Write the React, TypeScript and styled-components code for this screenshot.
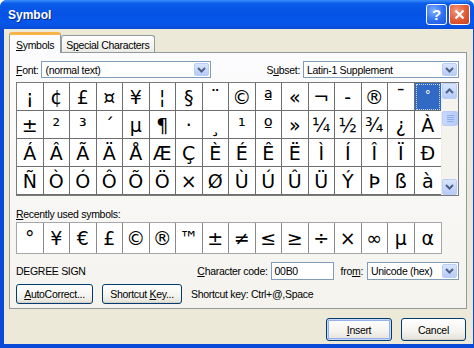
import styled, { createGlobalStyle } from "styled-components";

const GlobalStyle = createGlobalStyle`
  html, body {
    margin: 0;
    padding: 0;
    background: #ffffff;
  }
  body {
    font-family: Tahoma, "Liberation Sans", "DejaVu Sans", sans-serif;
    font-size: 10.5px;
    letter-spacing: -0.3px;
    color: #000;
  }
  * {
    box-sizing: border-box;
  }
`;

const rows: string[][] = [
  ["¡", "¢", "£", "¤", "¥", "¦", "§", "¨", "©", "ª", "«", "¬", "-", "®", "¯", "°"],
  ["±", "²", "³", "´", "µ", "¶", "·", "¸", "¹", "º", "»", "¼", "½", "¾", "¿", "À"],
  ["Á", "Â", "Ã", "Ä", "Å", "Æ", "Ç", "È", "É", "Ê", "Ë", "Ì", "Í", "Î", "Ï", "Ð"],
  ["Ñ", "Ò", "Ó", "Ô", "Õ", "Ö", "×", "Ø", "Ù", "Ú", "Û", "Ü", "Ý", "Þ", "ß", "à"],
];

const recent = ["°", "¥", "€", "£", "©", "®", "™", "±", "≠", "≤", "≥", "÷", "×", "∞", "µ", "α"];

const Window = styled.div`
  width: 474px;
  height: 348px;
  display: flex;
  flex-direction: column;
  border-radius: 7px 7px 0 0;
  overflow: hidden;
  background: #0a4ad8;
`;

const TitleBar = styled.div`
  height: 29px;
  flex: none;
  display: flex;
  align-items: center;
  padding: 0 4px 0 8px;
  background: linear-gradient(
    to bottom,
    #3c8ffc 0%,
    #0a5ce8 12%,
    #0653e6 45%,
    #0657ea 80%,
    #0a4cd6 100%
  );
`;

const Title = styled.span`
  flex: 1;
  color: #fff;
  font-family: "Liberation Sans", "DejaVu Sans", sans-serif;
  font-weight: bold;
  font-size: 12px;
  letter-spacing: 0;
  text-shadow: 1px 1px 0 #0a2a8c;
`;

const CaptionButton = styled.div<{ $close?: boolean }>`
  width: 21px;
  height: 21px;
  margin-left: 2px;
  border: 1px solid #fff;
  border-radius: 3px;
  display: flex;
  align-items: center;
  justify-content: center;
  color: #fff;
  font-family: "Liberation Sans", sans-serif;
  font-weight: bold;
  font-size: 15px;
  background: ${(p) =>
    p.$close
      ? "radial-gradient(circle at 35% 30%, #f39a7c 0%, #e05a33 55%, #c8401e 100%)"
      : "radial-gradient(circle at 35% 30%, #7fb0ff 0%, #2f6ff0 55%, #1d56dc 100%)"};
`;

const Frame = styled.div`
  flex: 1;
  padding: 0 4px 4px;
  display: flex;
`;

const Body = styled.div`
  flex: 1;
  background: #ece9d8;
  padding: 3px 6px 0 5px;
  display: flex;
  flex-direction: column;
`;

const TabRow = styled.div`
  height: 20px;
  display: flex;
  align-items: flex-end;
  position: relative;
  z-index: 1;
`;

const Tab = styled.div<{ $active?: boolean }>`
  height: ${(p) => (p.$active ? "21px" : "17px")};
  margin-bottom: ${(p) => (p.$active ? "-1px" : "0")};
  padding: 1px ${(p) => (p.$active ? "6px" : "4px")} 0;
  display: flex;
  align-items: center;
  border: 1px solid #919b9c;
  border-bottom: none;
  border-radius: 3px 3px 0 0;
  background: ${(p) =>
    p.$active ? "#fcfcfe" : "linear-gradient(#ffffff, #ecebe6)"};
  border-top: ${(p) => (p.$active ? "3px solid #f7b44a" : "1px solid #919b9c")};
`;

const Panel = styled.div`
  border: 1px solid #919b9c;
  background: linear-gradient(#fcfcfe, #f4f3ee);
  padding: 8px 7px 4px 6px;
  display: flex;
  flex-direction: column;
  height: 257px;
`;

const Row = styled.div`
  display: flex;
  align-items: center;
`;

const Label = styled.span<{ $gap?: number }>`
  margin-right: ${(p) => p.$gap ?? 3}px;
  white-space: nowrap;
`;

const SelectBox = styled.div<{ $width: number }>`
  width: ${(p) => p.$width}px;
  height: ${(p) => (p.$width > 100 ? 17 : 18)}px;
  border: 1px solid #7f9db9;
  background: #fff;
  display: flex;
  align-items: center;
  padding: 1px 1px 1px 3px;
`;

const SelectText = styled.span`
  flex: 1;
  white-space: nowrap;
`;

const ArrowButton = styled.div<{ $h?: number }>`
  width: 15px;
  height: ${(p) => p.$h ?? 15}px;
  border: 1px solid #b9cdf8;
  border-radius: 2px;
  background: linear-gradient(#d9e5fd, #b7cbf7);
  display: flex;
  align-items: center;
  justify-content: center;
`;

const Spacer = styled.div`
  flex: 1;
`;

const ListBox = styled.div`
  margin-top: 4px;
  width: 443px;
  height: 114px;
  border: 1px solid #7a7a7a;
  display: flex;
  background: #fff;
`;

const SymbolGrid = styled.div<{ $rows: number; $h: number }>`
  width: 424px;
  display: grid;
  grid-template-columns: repeat(16, 1fr);
  grid-template-rows: repeat(${(p) => p.$rows}, ${(p) => p.$h}px);
`;

const Cell = styled.div<{ $selected?: boolean; $last?: boolean; $line: string }>`
  display: flex;
  align-items: center;
  justify-content: center;
  font-family: "DejaVu Sans", "Liberation Sans", sans-serif;
  font-size: 19px;
  letter-spacing: 0;
  border-right: ${(p) => (p.$last ? "none" : `1px solid ${p.$line}`)};
  border-bottom: 1px solid ${(p) => p.$line};
  background: ${(p) => (p.$selected ? "#316ac5" : "#fff")};
  color: ${(p) => (p.$selected ? "#fff" : "#000")};
  outline: ${(p) => (p.$selected ? "1px dotted #c9d7f2" : "none")};
  outline-offset: -2px;
`;

const ScrollBar = styled.div`
  width: 17px;
  display: flex;
  flex-direction: column;
  background: #f4f3ee;
  border-left: 1px solid #eeede5;
`;

const ScrollTrack = styled.div`
  flex: 1;
  padding-top: 12px;
`;

const Thumb = styled.div`
  height: 15px;
  border: 1px solid #b9cdf8;
  border-radius: 2px;
  background: linear-gradient(to right, #c9d8fc, #b6cbf7);
  display: flex;
  flex-direction: column;
  align-items: center;
  justify-content: center;
  gap: 1px;

  span {
    width: 7px;
    height: 1px;
    background: #8eaef0;
  }
`;

const RecentLabel = styled.div`
  margin-top: 12px;
  height: 13px;
  line-height: 13px;
`;

const RecentBox = styled.div`
  margin-top: 1px;
  width: 426px;
  height: 32px;
  border: 1px solid #a7a6aa;
  background: #fff;
`;

const InfoRow = styled(Row)`
  margin-top: 8px;
  height: 18px;
`;

const CodeInput = styled.div`
  width: 63px;
  height: 18px;
  border: 1px solid #7f9db9;
  background: #fff;
  padding-left: 3px;
  display: flex;
  align-items: center;
  margin-right: 7px;
`;

const ButtonRow = styled(Row)`
  margin-top: 4px;
  height: 20px;
`;

const Button = styled.div<{ $width: number; $default?: boolean }>`
  width: ${(p) => p.$width}px;
  height: ${(p) => (p.$default ? 23 : 20)}px;
  border: 1px solid #003c74;
  border-radius: 3px;
  background: linear-gradient(#ffffff 0%, #f4f3ee 60%, #e3e1d8 100%);
  display: flex;
  align-items: center;
  justify-content: center;
  white-space: nowrap;
  margin-right: 9px;
  box-shadow: ${(p) =>
    p.$default
      ? "inset 0 0 0 1px #c6d7f7, inset 0 0 0 2px #95b0ea"
      : "inset 0 -1px 0 #d6d0c5"};
`;

const Footer = styled.div`
  display: flex;
  justify-content: flex-end;
  padding-top: 9px;
  padding-right: 1px;
  gap: 9px;

  ${Button} {
    margin-right: 0;
    height: 23px;
  }
`;

function Chevron({ up }: { up?: boolean }) {
  return (
    <svg width="9" height="6" viewBox="0 0 9 6">
      <path
        d={up ? "M1 5 L4.5 1.5 L8 5" : "M1 1 L4.5 4.5 L8 1"}
        fill="none"
        stroke="#4d6185"
        strokeWidth="2"
      />
    </svg>
  );
}

function Select({ width, text }: { width: number; text: string }) {
  return (
    <SelectBox $width={width}>
      <SelectText>{text}</SelectText>
      <ArrowButton $h={width > 100 ? 13 : 14}>
        <Chevron />
      </ArrowButton>
    </SelectBox>
  );
}

export default function App() {
  return (
    <>
      <GlobalStyle />
      <Window>
        <TitleBar>
          <Title>Symbol</Title>
          <CaptionButton>?</CaptionButton>
          <CaptionButton $close>
            <svg width="11" height="11" viewBox="0 0 11 11">
              <path d="M1.5 1.5 L9.5 9.5 M9.5 1.5 L1.5 9.5" stroke="#fff" strokeWidth="2.2" />
            </svg>
          </CaptionButton>
        </TitleBar>
        <Frame>
          <Body>
            <TabRow>
              <Tab $active>
                <span>
                  <u>S</u>ymbols
                </span>
              </Tab>
              <Tab>
                <span>
                  S<u>p</u>ecial Characters
                </span>
              </Tab>
            </TabRow>
            <Panel>
              <Row>
                <Label>
                  <u>F</u>ont:
                </Label>
                <Select width={170} text="(normal text)" />
                <Spacer />
                <Label>
                  S<u>u</u>bset:
                </Label>
                <Select width={156} text="Latin-1 Supplement" />
              </Row>
              <ListBox>
                <SymbolGrid $rows={4} $h={28}>
                  {rows.map((row, r) =>
                    row.map((ch, c) => (
                      <Cell
                        key={`${r}-${c}`}
                        $line="#6e6e6e"
                        $last={c === 15}
                        $selected={r === 0 && c === 15}
                        style={
                          r === 0 && c === 15
                            ? { fontSize: 12, alignItems: "flex-start", paddingTop: 5 }
                            : undefined
                        }
                      >
                        {ch}
                      </Cell>
                    ))
                  )}
                </SymbolGrid>
                <ScrollBar>
                  <ArrowButton $h={16}>
                    <Chevron up />
                  </ArrowButton>
                  <ScrollTrack>
                    <Thumb>
                      <span />
                      <span />
                      <span />
                      <span />
                    </Thumb>
                  </ScrollTrack>
                  <ArrowButton $h={16}>
                    <Chevron />
                  </ArrowButton>
                </ScrollBar>
              </ListBox>
              <RecentLabel>
                <u>R</u>ecently used symbols:
              </RecentLabel>
              <RecentBox>
                <SymbolGrid $rows={1} $h={30}>
                  {recent.map((ch, i) => (
                    <Cell key={i} $line="#8a8a8a" $last={i === 15} style={{ borderBottom: "none" }}>
                      {ch}
                    </Cell>
                  ))}
                </SymbolGrid>
              </RecentBox>
              <InfoRow>
                <Label>DEGREE SIGN</Label>
                <Spacer />
                <Label>
                  <u>C</u>haracter code:
                </Label>
                <CodeInput>00B0</CodeInput>
                <Label $gap={4}>
                  fro<u>m</u>:
                </Label>
                <Select width={92} text="Unicode (hex)" />
              </InfoRow>
              <ButtonRow>
                <Button $width={77}>
                  <span>
                    <u>A</u>utoCorrect...
                  </span>
                </Button>
                <Button $width={80}>
                  <span>
                    Shortcut <u>K</u>ey...
                  </span>
                </Button>
                <span>Shortcut key: Ctrl+@,Space</span>
              </ButtonRow>
            </Panel>
            <Footer>
              <Button $width={66} $default>
                <span>
                  <u>I</u>nsert
                </span>
              </Button>
              <Button $width={65}>
                <span>Cancel</span>
              </Button>
            </Footer>
          </Body>
        </Frame>
      </Window>
    </>
  );
}
